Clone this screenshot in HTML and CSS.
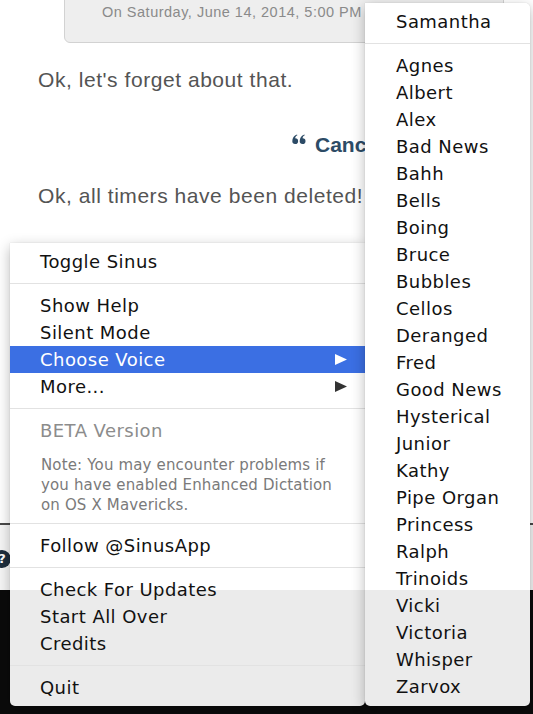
FILE: index.html
```html
<!DOCTYPE html>
<html>
<head>
<meta charset="utf-8">
<link rel="stylesheet" href="styles.css">
</head>
<body>
<div class="page">
  <div class="chat">
    <div class="bubble">On Saturday, June 14, 2014, 5:00 PM</div>
    <p class="msg msg-first">Ok, let's forget about that.</p>
    <p class="cmd"><svg class="quote" width="14" height="10" viewBox="0 0 14 10"><path d="M3.2 4.2a2.9 2.9 0 1 1-2.9 3C0.3 4 2 1.4 5 0.4l0.4 0.9C3.9 2 3.3 3 3.2 4.2z M10.6 4.2a2.9 2.9 0 1 1-2.9 3C7.7 4 9.4 1.4 12.4 0.4l0.4 0.9C11.3 2 10.7 3 10.6 4.2z" fill="#2c4b66"/></svg>Cancel</p>
    <p class="msg msg-second">Ok, all timers have been deleted!</p>
  </div>
  <div class="toolbar"><span class="help">?</span></div>
  <div class="dock"></div>

  <div class="menu main-menu">
    <div class="item">Toggle Sinus</div>
    <div class="sep"></div>
    <div class="item">Show Help</div>
    <div class="item">Silent Mode</div>
    <div class="item sub active">Choose Voice<svg class="arrow" width="12" height="11" viewBox="0 0 12 11"><polygon points="0,0 12,5.5 0,11" fill="#ffffff"/></svg></div>
    <div class="item sub">More...<svg class="arrow" width="12" height="11" viewBox="0 0 12 11"><polygon points="0,0 12,5.5 0,11" fill="#333333"/></svg></div>
    <div class="sep"></div>
    <div class="item disabled">BETA Version</div>
    <div class="note">Note: You may encounter problems if<br>you have enabled Enhanced Dictation<br>on OS X Mavericks.</div>
    <div class="sep"></div>
    <div class="item">Follow @SinusApp</div>
    <div class="sep"></div>
    <div class="item">Check For Updates</div>
    <div class="item">Start All Over</div>
    <div class="item">Credits</div>
    <div class="sep"></div>
    <div class="item">Quit</div>
  </div>

  <div class="menu voice-menu">
    <div class="item">Samantha</div>
    <div class="sep"></div>
    <div class="item">Agnes</div>
    <div class="item">Albert</div>
    <div class="item">Alex</div>
    <div class="item">Bad News</div>
    <div class="item">Bahh</div>
    <div class="item">Bells</div>
    <div class="item">Boing</div>
    <div class="item">Bruce</div>
    <div class="item">Bubbles</div>
    <div class="item">Cellos</div>
    <div class="item">Deranged</div>
    <div class="item">Fred</div>
    <div class="item">Good News</div>
    <div class="item">Hysterical</div>
    <div class="item">Junior</div>
    <div class="item">Kathy</div>
    <div class="item">Pipe Organ</div>
    <div class="item">Princess</div>
    <div class="item">Ralph</div>
    <div class="item">Trinoids</div>
    <div class="item">Vicki</div>
    <div class="item">Victoria</div>
    <div class="item">Whisper</div>
    <div class="item">Zarvox</div>
  </div>
</div>
</body>
</html>
```

FILE: styles.css
```css
* { box-sizing: border-box; }
html, body { margin: 0; padding: 0; }
body {
  width: 533px;
  height: 714px;
  overflow: hidden;
  background: #ffffff;
}
.page {
  position: relative;
  width: 533px;
  height: 714px;
  display: flex;
  flex-direction: column;
  overflow: hidden;
}
.chat {
  height: 523px;
  flex: none;
  font-family: "Liberation Sans", Arial, sans-serif;
}
.bubble {
  margin: -10px 0 0 64px;
  width: 440px;
  padding: 11px 0 20px 37px;
  line-height: 20px;
  background: #eeeeee;
  border: 1px solid #d2d2d2;
  border-radius: 6px;
  color: #8a8a8a;
  font-size: 14.5px;
  letter-spacing: 0.5px;
  white-space: nowrap;
}
.msg {
  margin: 0;
  padding-left: 38px;
  font-size: 21px;
  line-height: 28px;
  letter-spacing: 0.55px;
  color: #545454;
  white-space: nowrap;
}
.msg-first { margin-top: 23px; }
.msg-second { margin-top: 23px; }
.cmd {
  margin: 37px 0 0;
  padding-left: 292px;
  width: 365px;
  overflow: hidden;
  font-size: 21px;
  line-height: 28px;
  font-weight: bold;
  color: #2c4b66;
  white-space: nowrap;
}
.quote { margin-right: 9px; vertical-align: 8px; }
.toolbar {
  height: 67px;
  flex: none;
  border-top: 2px solid #4a4a4a;
  background: #f6f6f6;
  position: relative;
}
.help {
  position: absolute;
  left: -7px;
  top: 25px;
  width: 18px;
  height: 18px;
  border-radius: 50%;
  background: #1e2e3e;
  color: #ffffff;
  font: bold 13px/18px "DejaVu Sans", sans-serif;
  text-align: center;
}
.dock {
  flex: 1;
  background: #0b0b0b;
}

.menu {
  position: absolute;
  font-family: "DejaVu Sans", "Lucida Grande", sans-serif;
  font-size: 18px;
  letter-spacing: 0.45px;
  color: #111111;
  box-shadow: 0 4px 14px rgba(0, 0, 0, 0.28), 0 0 1px rgba(0, 0, 0, 0.25);
}
.main-menu {
  left: 10px;
  top: 243px;
  width: 355px;
  height: 463px;
  padding: 5px 0 5px;
  border-radius: 0 0 5px 5px;
  background: linear-gradient(#ffffff 0, #ffffff 347px, #ebebeb 347px);
}
.voice-menu {
  left: 365px;
  top: 3px;
  width: 165px;
  height: 703px;
  padding: 5px 0 6px;
  border-radius: 0 5px 5px 5px;
  background: linear-gradient(#ffffff 0, #ffffff 587px, #ebebeb 587px);
}
.item {
  height: 27px;
  line-height: 27px;
  padding-left: 30px;
  white-space: nowrap;
}
.voice-menu .item { padding-left: 31px; }
.item.sub {
  display: flex;
  align-items: center;
  justify-content: space-between;
  padding-right: 18px;
}
.item.active {
  background: #3b6fe3;
  color: #ffffff;
}
.item.disabled { color: #8c8c8c; }
.sep {
  height: 1px;
  margin: 8px 0;
  background: #e2e2e2;
}
.note {
  margin-top: 11px;
  padding-left: 31px;
  font-size: 15px;
  line-height: 20px;
  letter-spacing: 0.15px;
  color: #7a7a7a;
  white-space: nowrap;
}
```
